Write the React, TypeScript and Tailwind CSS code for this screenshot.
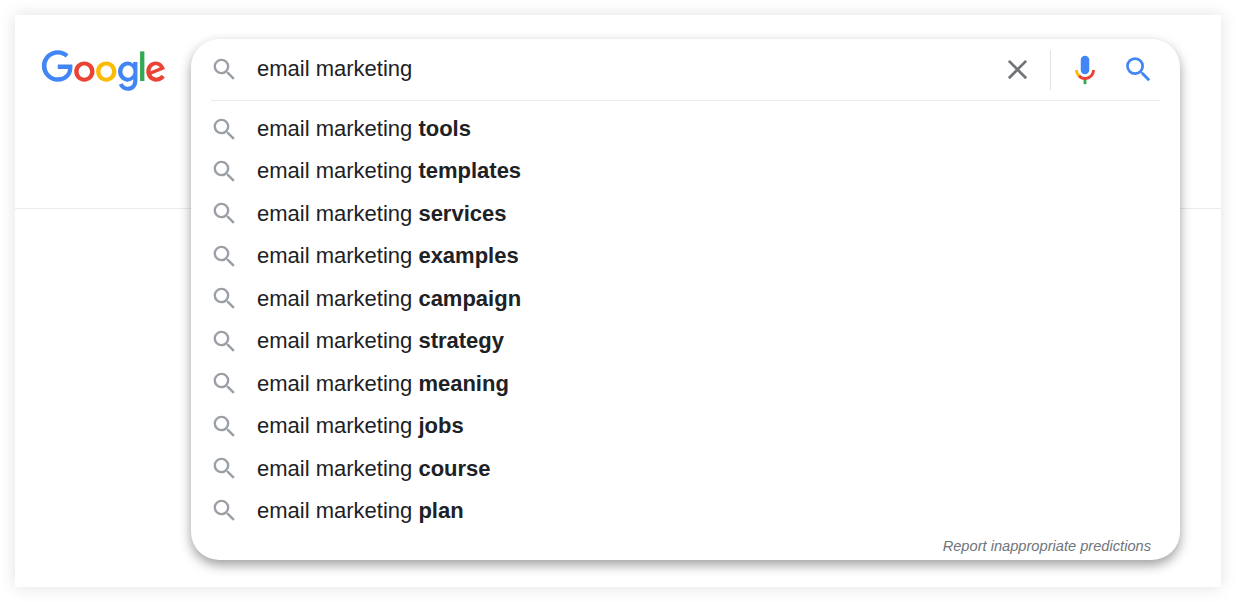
const suggestions = ["tools", "templates", "services", "examples", "campaign", "strategy", "meaning", "jobs", "course", "plan"];

const searchPath =
  "M15.5 14h-.79l-.28-.27A6.471 6.471 0 0 0 16 9.5 6.5 6.5 0 1 0 9.5 16c1.61 0 3.09-.59 4.23-1.57l.27.28v.79l5 4.99L20.49 19l-4.99-5zm-6 0C7.01 14 5 11.99 5 9.5S7.01 5 9.5 5 14 7.01 14 9.5 11.99 14 9.5 14z";

function SearchIcon({ className }: { className: string }) {
  return (
    <svg viewBox="0 0 24 24" className={className} fill="currentColor">
      <path d={searchPath} />
    </svg>
  );
}

function GoogleLogo() {
  return (
    <svg viewBox="0 0 272 92" className="w-[125.5px] h-[42px] shrink-0">
      <path fill="#EA4335" d="M115.75 47.18c0 12.77-9.99 22.18-22.25 22.18s-22.25-9.41-22.25-22.18C71.25 34.32 81.24 25 93.5 25s22.25 9.32 22.25 22.18zm-9.74 0c0-7.98-5.79-13.44-12.51-13.44S80.99 39.2 80.99 47.18c0 7.9 5.79 13.44 12.51 13.44s12.51-5.55 12.51-13.44z" />
      <path fill="#FBBC05" d="M163.75 47.18c0 12.77-9.99 22.18-22.25 22.18s-22.25-9.41-22.25-22.18c0-12.85 9.99-22.18 22.25-22.18s22.25 9.32 22.25 22.18zm-9.74 0c0-7.98-5.79-13.44-12.51-13.44s-12.51 5.46-12.51 13.44c0 7.9 5.79 13.44 12.51 13.44s12.51-5.55 12.51-13.44z" />
      <path fill="#4285F4" d="M209.75 26.34v39.82c0 16.38-9.66 23.07-21.08 23.07-10.75 0-17.22-7.19-19.66-13.07l8.48-3.53c1.51 3.61 5.21 7.87 11.17 7.87 7.31 0 11.84-4.51 11.84-13v-3.19h-.34c-2.18 2.69-6.38 5.04-11.68 5.04-11.09 0-21.25-9.66-21.25-22.09 0-12.52 10.16-22.26 21.25-22.26 5.29 0 9.49 2.35 11.68 4.96h.34v-3.61h9.25zm-8.56 20.92c0-7.81-5.21-13.52-11.84-13.52-6.72 0-12.35 5.71-12.35 13.52 0 7.73 5.63 13.36 12.35 13.36 6.63 0 11.84-5.63 11.84-13.36z" />
      <path fill="#34A853" d="M225 3v65h-9.5V3h9.5z" />
      <path fill="#EA4335" d="M262.02 54.48l7.56 5.04c-2.44 3.61-8.32 9.83-18.48 9.83-12.6 0-22.01-9.74-22.01-22.18 0-13.19 9.49-22.18 20.92-22.18 11.51 0 17.14 9.16 18.98 14.11l1.01 2.52-29.65 12.28c2.27 4.45 5.8 6.72 10.75 6.72 4.96 0 8.4-2.44 10.92-6.14zm-23.27-7.98l19.82-8.23c-1.09-2.77-4.37-4.7-8.23-4.7-4.95 0-11.84 4.37-11.59 12.93z" />
      <path fill="#4285F4" d="M35.29 41.41V32H67c.31 1.64.47 3.58.47 5.68 0 7.06-1.93 15.79-8.15 22.01-6.05 6.3-13.78 9.66-24.02 9.66C16.32 69.35.36 53.89.36 34.91.36 15.93 16.32.47 35.3.47c10.5 0 17.98 4.12 23.6 9.49l-6.64 6.64c-4.03-3.78-9.49-6.72-16.97-6.72-13.86 0-24.7 11.17-24.7 25.03 0 13.86 10.84 25.03 24.7 25.03 8.99 0 14.11-3.61 17.39-6.89 2.66-2.66 4.41-6.46 5.1-11.65l-22.49.01z" />
    </svg>
  );
}

function MicIcon() {
  return (
    <svg viewBox="0 0 24 24" className="w-[34px] h-[34px] shrink-0">
      <path fill="#4285f4" d="m12 15c1.66 0 3-1.31 3-2.97v-7.02c0-1.66-1.34-3.01-3-3.01s-3 1.34-3 3.01v7.02c0 1.66 1.34 2.97 3 2.97z" />
      <path fill="#34a853" d="m11 18.08h2v3.92h-2z" />
      <path fill="#fbbc05" d="m7.05 16.87c-1.27-1.33-2.05-2.83-2.05-4.87h2c0 1.45 0.56 2.42 1.47 3.38v0.32l-1.15 1.18z" />
      <path fill="#ea4335" d="m12 16.93a4.97 5.25 0 0 1 -3.54 -1.55l-1.41 1.49c1.26 1.34 3.02 2.13 4.95 2.13 3.87 0 6.99-2.92 6.99-6.99h-2c0 2.92-2.24 4.92-4.99 4.92z" />
    </svg>
  );
}

export default function App() {
  return (
    <div className="h-[602px] bg-white p-[15px] font-['Liberation_Sans',Arial,sans-serif] text-[#202124] overflow-hidden">
      <div className="relative h-[572px] bg-white shadow-[0_0_16px_rgba(0,0,0,0.12)]">
        <header className="flex h-[194px] items-start border-b border-[#ebebeb] pl-[26px] pt-[35px]">
          <GoogleLogo />
        </header>

        {/* dropdown sits over the header line */}
        <div className="absolute left-[176px] top-[24px] flex h-[521px] w-[989px] flex-col rounded-[28px] bg-white shadow-[0_5px_12px_rgba(0,0,0,0.38)]">
          <div className="flex h-[61px] shrink-0 items-center pl-[19px] pr-[25px]">
            <SearchIcon className="h-[29px] w-[29px] shrink-0 text-[#9aa0a6]" />
            <span className="ml-[18px] flex-1 pb-[2px] text-[22px] leading-[28px]">email marketing</span>
            <svg viewBox="0 0 24 24" className="h-[33px] w-[33px] shrink-0" fill="#70757a">
              <path d="M19 6.41L17.59 5 12 10.59 6.41 5 5 6.41 10.59 12 5 17.59 6.41 19 12 13.41 17.59 19 19 17.59 13.41 12z" />
            </svg>
            <div className="ml-[16px] mr-[16.5px] h-[40px] w-px bg-[#dfe1e5]" />
            <MicIcon />
            <SearchIcon className="ml-[20.5px] h-[33px] w-[33px] shrink-0 text-[#4285f4]" />
          </div>
          <div className="ml-[20px] mr-[20px] border-t border-[#e8eaed]" />

          <ul className="pt-[6.8px]">
            {suggestions.map((s) => (
              <li key={s} className="flex h-[42.44px] items-center pl-[19px]">
                <SearchIcon className="h-[29px] w-[29px] shrink-0 text-[#9aa0a6]" />
                <span className="ml-[18px] text-[22px] leading-[28px]">
                  email marketing <b className="font-bold">{s}</b>
                </span>
              </li>
            ))}
          </ul>

          <div className="pr-[29px] pt-[3.8px] text-right text-[14.65px] italic leading-[20px] text-[#70757a]">
            Report inappropriate predictions
          </div>
        </div>
      </div>
    </div>
  );
}
